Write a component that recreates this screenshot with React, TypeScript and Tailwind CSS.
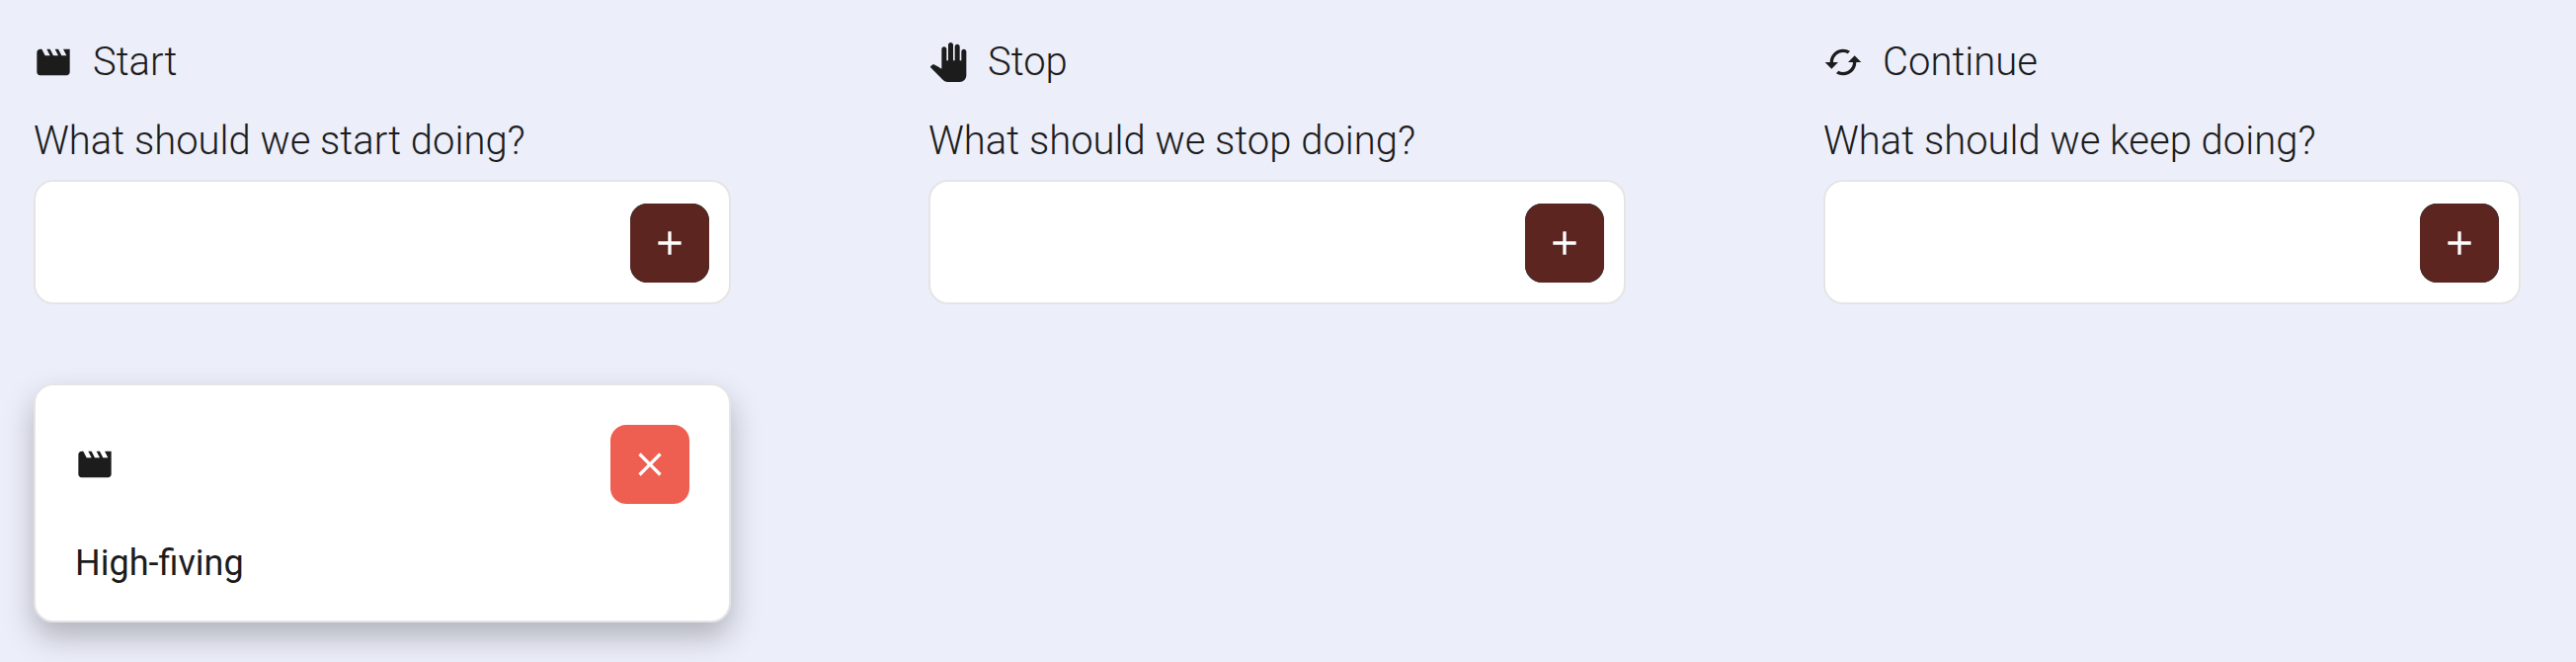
import type { ReactNode } from "react";
import { MdAdd, MdCached, MdClose, MdMovie, MdPanTool } from "react-icons/md";

type Column = {
  id: string;
  title: string;
  prompt: string;
  icon: ReactNode;
  notes: string[];
};

const columns: Column[] = [
  {
    id: "start",
    title: "Start",
    prompt: "What should we start doing?",
    icon: <MdMovie className="size-10 shrink-0" aria-hidden="true" />,
    notes: ["High-fiving"],
  },
  {
    id: "stop",
    title: "Stop",
    prompt: "What should we stop doing?",
    icon: <MdPanTool className="size-10 shrink-0" aria-hidden="true" />,
    notes: [],
  },
  {
    id: "continue",
    title: "Continue",
    prompt: "What should we keep doing?",
    icon: <MdCached className="size-10 shrink-0" aria-hidden="true" />,
    notes: [],
  },
];

function NoteForm({ id, prompt }: { id: string; prompt: string }) {
  return (
    <form onSubmit={(event) => event.preventDefault()}>
      <label htmlFor={id} className="block text-[40px] leading-[56px] font-light">
        {prompt}
      </label>
      <div className="mt-[11px] flex items-center rounded-[20px] border-2 border-[#e5e5e5] bg-white pt-[22px] pr-5 pb-5 pl-6">
        <input id={id} type="text" className="h-20 min-w-0 flex-1 bg-transparent text-4xl outline-none" />
        <button type="submit" aria-label="Add" className="size-20 shrink-0 rounded-[17px] bg-[#12383a] text-white">
          <span className="flex size-full items-center justify-center rounded-[18px] bg-[#5c2520]">
            <MdAdd className="size-10" aria-hidden="true" />
          </span>
        </button>
      </div>
    </form>
  );
}

function NoteCard({ icon, text }: { icon: ReactNode; text: string }) {
  return (
    <article className="rounded-[20px] border-2 border-[#e5e5e5] bg-white px-10 pt-10 pb-9 shadow-[0_15px_30px_rgba(0,0,0,0.25)]">
      <div className="flex items-center justify-between">
        {icon}
        <button
          type="button"
          aria-label="Remove"
          className="flex size-20 items-center justify-center rounded-[16px] bg-[#ee5f51] text-white"
        >
          <MdClose className="size-10" aria-hidden="true" />
        </button>
      </div>
      <p className="mt-[38px] text-4xl leading-[44px]">{text}</p>
    </article>
  );
}

export default function App() {
  return (
    <main className="grid min-h-screen grid-cols-3 items-start gap-[200px] bg-[#eceefa] pt-[35px] pr-14 pb-10 pl-[34px] font-['Roboto',sans-serif] text-[#1c1c1c]">
      {columns.map((column) => (
        <section key={column.id}>
          <h2 className="flex items-center gap-5 text-[40px] leading-[56px] font-light">
            {column.icon}
            {column.title}
          </h2>
          <div className="mt-6">
            <NoteForm id={column.id} prompt={column.prompt} />
          </div>
          <div className="mt-20 flex flex-col gap-10">
            {column.notes.map((note) => (
              <NoteCard key={note} icon={column.icon} text={note} />
            ))}
          </div>
        </section>
      ))}
    </main>
  );
}
